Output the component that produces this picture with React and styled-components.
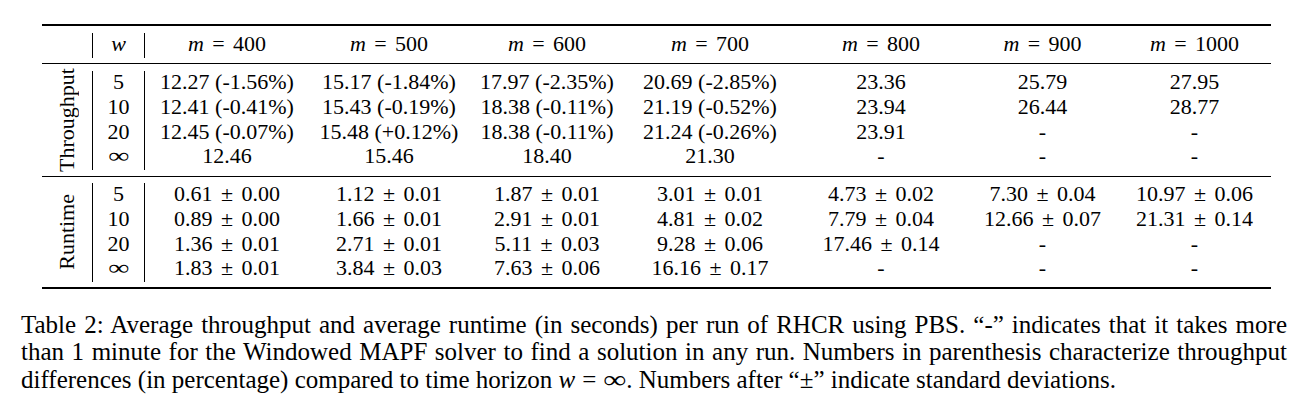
import React from "react";
import styled, { createGlobalStyle } from "styled-components";

const GlobalStyle = createGlobalStyle`
  body {
    margin: 0;
    background: #fff;
    color: #000;
    font-family: "Liberation Serif", "Times New Roman", serif;
  }
`;

const Page = styled.div`
  width: 1301px;
  height: 414px;
  padding: 24px 0 0 21px;
  box-sizing: border-box;
`;

const TableWrap = styled.div`
  margin-left: 21px;
  width: 1229px;
  font-size: 22px;
`;

const Rule = styled.div`
  height: ${(p) => (p.$thick ? "2px" : "1px")};
  background: #000;
`;

const Section = styled.div`
  display: grid;
  grid-template-columns: 50px 53px 164px 160px 156px 170px 172px 151px 153px;
  grid-auto-rows: 24.75px;
  padding: ${(p) => p.$pad || "7px 0 5px"};
`;

const Cell = styled.div`
  display: flex;
  align-items: center;
  justify-content: center;
  white-space: nowrap;
  line-height: 22px;
  padding-bottom: 2px;
`;

const WCell = styled(Cell)`
  grid-column: 2;
  border-left: 1px solid #000;
  border-right: 1px solid #000;
`;

const LabelCell = styled(Cell)`
  grid-column: 1;
  grid-row: 1 / span ${(p) => p.$span};
  padding-bottom: 0;
`;

const Rotated = styled.span`
  writing-mode: vertical-rl;
  transform: rotate(180deg);
  line-height: 24px;
`;

const Var = styled.i`
  font-style: italic;
`;

const Op = styled.span`
  margin: 0 0.38em;
`;

// the TeX infinity is wider and flatter than the Liberation one
const Inf = styled.span`
  display: inline-block;
  transform: scaleX(${(p) => p.$stretch || 1.35});
  margin: 0 ${(p) => p.$gap || "0.12em"};
`;

const Caption = styled.div`
  margin-top: 22px;
  width: 1266px;
  font-size: 25px;
  line-height: 27.7px;
`;

const Line = styled.div`
  text-align: ${(p) => (p.$last ? "left" : "justify")};
  text-align-last: ${(p) => (p.$last ? "left" : "justify")};
  white-space: nowrap;
`;

const MathOp = styled.span`
  margin: 0 0.28em;
`;

const cols = [400, 500, 600, 700, 800, 900, 1000];

const throughput = [
  ["5", ["12.27 (-1.56%)", "15.17 (-1.84%)", "17.97 (-2.35%)", "20.69 (-2.85%)", "23.36", "25.79", "27.95"]],
  ["10", ["12.41 (-0.41%)", "15.43 (-0.19%)", "18.38 (-0.11%)", "21.19 (-0.52%)", "23.94", "26.44", "28.77"]],
  ["20", ["12.45 (-0.07%)", "15.48 (+0.12%)", "18.38 (-0.11%)", "21.24 (-0.26%)", "23.91", "-", "-"]],
  ["inf", ["12.46", "15.46", "18.40", "21.30", "-", "-", "-"]],
];

const runtime = [
  ["5", [["0.61", "0.00"], ["1.12", "0.01"], ["1.87", "0.01"], ["3.01", "0.01"], ["4.73", "0.02"], ["7.30", "0.04"], ["10.97", "0.06"]]],
  ["10", [["0.89", "0.00"], ["1.66", "0.01"], ["2.91", "0.01"], ["4.81", "0.02"], ["7.79", "0.04"], ["12.66", "0.07"], ["21.31", "0.14"]]],
  ["20", [["1.36", "0.01"], ["2.71", "0.01"], ["5.11", "0.03"], ["9.28", "0.06"], ["17.46", "0.14"], "-", "-"]],
  ["inf", [["1.83", "0.01"], ["3.84", "0.03"], ["7.63", "0.06"], ["16.16", "0.17"], "-", "-", "-"]],
];

const WValue = ({ w }) => (w === "inf" ? <Inf>∞</Inf> : w);

const Block = ({ label, rows, pad, renderValue }) => (
  <Section $pad={pad}>
    <LabelCell $span={rows.length}>
      <Rotated>{label}</Rotated>
    </LabelCell>
    {rows.map(([w, values]) => (
      <React.Fragment key={w}>
        <WCell>
          <WValue w={w} />
        </WCell>
        {values.map((v, i) => (
          <Cell key={i}>{renderValue(v)}</Cell>
        ))}
      </React.Fragment>
    ))}
  </Section>
);

const pm = (v) =>
  Array.isArray(v) ? (
    <>
      {v[0]}
      <Op>±</Op>
      {v[1]}
    </>
  ) : (
    v
  );

export default function App() {
  return (
    <Page>
      <GlobalStyle />
      <TableWrap>
        <Rule $thick />
        <Section $pad="7px 0 5px">
          <Cell />
          <WCell>
            <Var>w</Var>
          </WCell>
          {cols.map((m) => (
            <Cell key={m}>
              <Var>m</Var>
              <Op>=</Op>
              {m}
            </Cell>
          ))}
        </Section>
        <Rule />
        <Block label="Throughput" rows={throughput} pad="7px 0 6px" renderValue={(v) => v} />
        <Rule />
        <Block label="Runtime" rows={runtime} pad="6px 0 5px" renderValue={pm} />
        <Rule $thick />
      </TableWrap>
      <Caption>
        <Line>
          Table 2: Average throughput and average runtime (in seconds) per run of RHCR using PBS. “-” indicates that it takes more
        </Line>
        <Line>
          than 1 minute for the Windowed MAPF solver to find a solution in any run. Numbers in parenthesis characterize throughput
        </Line>
        <Line $last>
          differences (in percentage) compared to time horizon <Var>w</Var>
          <MathOp>=</MathOp>
          <Inf $stretch={1.3} $gap="0.1em">∞</Inf>. Numbers after “±” indicate standard deviations.
        </Line>
      </Caption>
    </Page>
  );
}
